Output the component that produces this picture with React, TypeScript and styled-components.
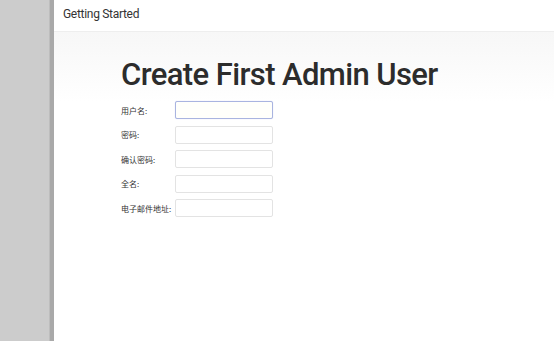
import React from 'react';
import styled, {createGlobalStyle} from 'styled-components';

const GlobalStyle = createGlobalStyle`
    html, body {
        margin: 0;
        padding: 0;
        height: 100%;
    }
    body {
        font-family: Roboto, "Noto Sans CJK SC", sans-serif;
        background: #cccccc;
        overflow: hidden;
    }
`;

const fields = [
    {label: '用户名:', type: 'text', focused: true},
    {label: '密码:', type: 'password'},
    {label: '确认密码:', type: 'password'},
    {label: '全名:', type: 'text'},
    {label: '电子邮件地址:', type: 'email'},
];

const Page = styled.div`
    display: flex;
    width: 554px;
    height: 341px;
    background: #cccccc;
`;

const Backdrop = styled.div`
    width: 50px;
    flex: none;
    border-right: 4px solid #a9a9a9;
    box-shadow: inset -1px 0 0 #bdbdbd;
`;

const Panel = styled.div`
    flex: 1;
    display: flex;
    flex-direction: column;
    background: #ffffff;
`;

const Header = styled.div`
    height: 28px;
    flex: none;
    display: flex;
    align-items: center;
    padding: 0 0 3px 9px;
    font-size: 12px;
    letter-spacing: -0.3px;
    color: #333333;
    border-bottom: 1px solid #eeeeee;
`;

const Body = styled.div`
    flex: 1;
    padding: 23px 0 0 67px;
    background: linear-gradient(to bottom, #f7f7f7 0px, #ffffff 70px);
`;

const Title = styled.h1`
    margin: 0 0 6px 0;
    font-size: 31px;
    font-weight: 500;
    line-height: 40px;
    color: #2c2c2c;
    letter-spacing: -0.6px;
`;

const Form = styled.div`
    display: grid;
    grid-template-columns: 54px 98px;
    row-gap: 6.5px;
    align-items: center;
`;

const Label = styled.label`
    font-size: 8px;
    white-space: nowrap;
    color: #333333;
    font-family: "Noto Sans CJK SC", sans-serif;
`;

const Input = styled.input<{$focused?: boolean}>`
    box-sizing: border-box;
    width: 98px;
    height: 18px;
    margin: 0;
    padding: 0 3px;
    border-radius: 2px;
    outline: none;
    border: 1px solid ${(p) => (p.$focused ? '#a9b4e0' : '#e3e3e3')};
    background: ${(p) => (p.$focused ? '#fffffb' : '#ffffff')};
    box-shadow: ${(p) => (p.$focused ? '0 0 1px #c6cdf0' : 'none')};
`;

const App = () => {
    return (
        <Page>
            <GlobalStyle/>
            <Backdrop/>
            <Panel>
                <Header>{'Getting Started'}</Header>
                <Body>
                    <Title>{'Create First Admin User'}</Title>
                    <Form>
                        {fields.map((f) => (
                            <React.Fragment key={f.label}>
                                <Label>{f.label}</Label>
                                <Input
                                    type={f.type}
                                    $focused={f.focused}
                                />
                            </React.Fragment>
                        ))}
                    </Form>
                </Body>
            </Panel>
        </Page>
    );
};

export default App;
